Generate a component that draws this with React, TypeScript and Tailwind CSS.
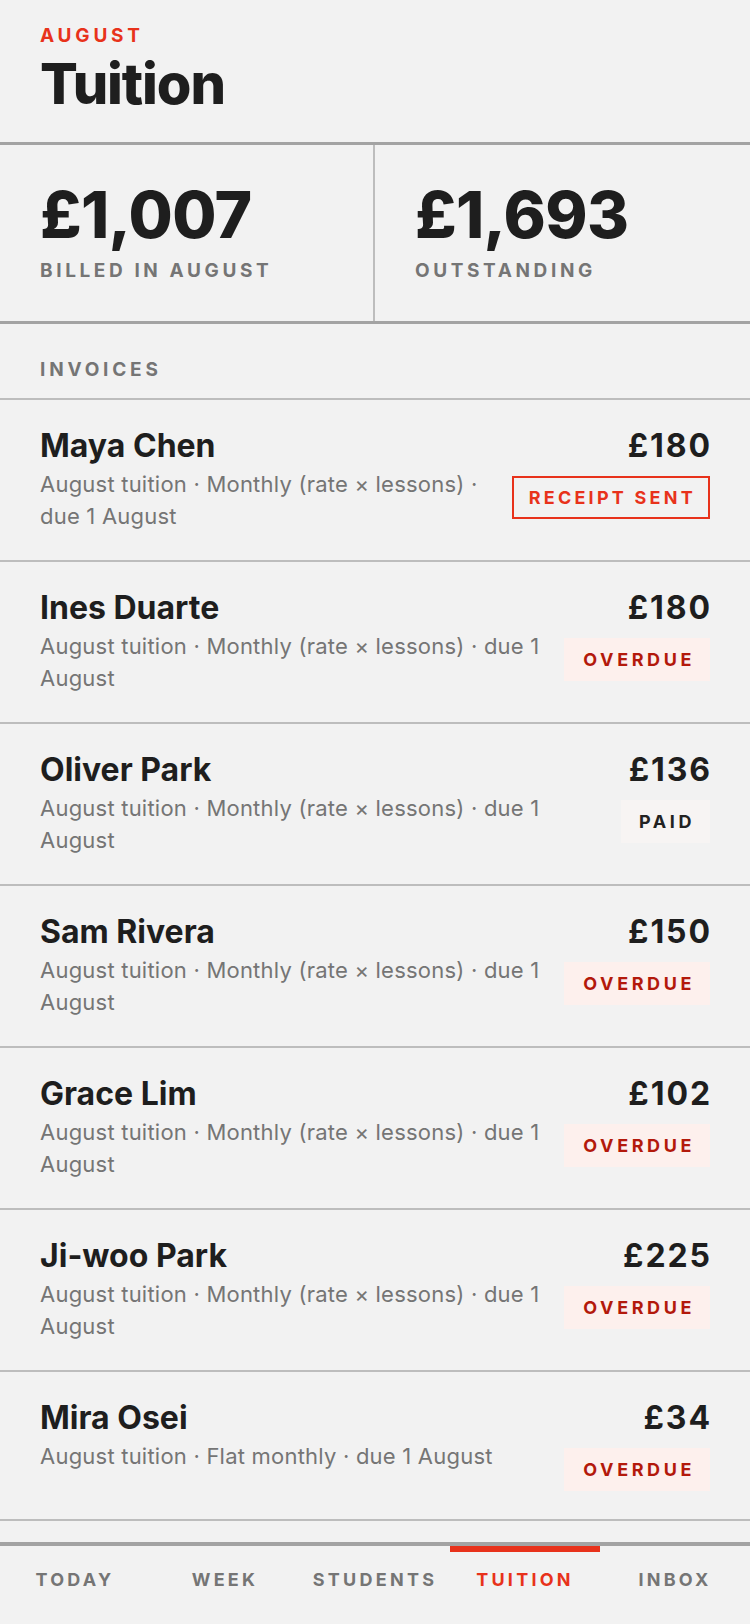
import React from "react";

type Status = "receipt" | "overdue" | "paid";

const invoices: { name: string; amount: string; desc: string; status: Status }[] = [
  { name: "Maya Chen", amount: "£180", desc: "August tuition · Monthly (rate × lessons) · due 1 August", status: "receipt" },
  { name: "Ines Duarte", amount: "£180", desc: "August tuition · Monthly (rate × lessons) · due 1 August", status: "overdue" },
  { name: "Oliver Park", amount: "£136", desc: "August tuition · Monthly (rate × lessons) · due 1 August", status: "paid" },
  { name: "Sam Rivera", amount: "£150", desc: "August tuition · Monthly (rate × lessons) · due 1 August", status: "overdue" },
  { name: "Grace Lim", amount: "£102", desc: "August tuition · Monthly (rate × lessons) · due 1 August", status: "overdue" },
  { name: "Ji-woo Park", amount: "£225", desc: "August tuition · Monthly (rate × lessons) · due 1 August", status: "overdue" },
  { name: "Mira Osei", amount: "£34", desc: "August tuition · Flat monthly · due 1 August", status: "overdue" },
];

function Badge({ status }: { status: Status }) {
  if (status === "receipt") {
    return (
      <div className="mt-3 h-[43px] pl-[15px] pr-[12px] flex items-center border-2 border-[#e8321b] text-[#e8321b] text-[18px] font-bold tracking-[0.18em]">
        RECEIPT SENT
      </div>
    );
  }
  if (status === "paid") {
    return (
      <div className="mt-3 h-[43px] pl-[18px] pr-[15px] flex items-center bg-[#f7f4f3] text-[#222] text-[18px] font-bold tracking-[0.2em]">
        PAID
      </div>
    );
  }
  return (
    <div className="mt-3 h-[43px] pl-[19px] pr-[15px] flex items-center bg-[#fdf0ed] text-[#b3190b] text-[18px] font-bold tracking-[0.2em]">
      OVERDUE
    </div>
  );
}

export default function App() {
  const tabs = ["TODAY", "WEEK", "STUDENTS", "TUITION", "INBOX"];
  return (
    <div
      className="h-[1624px] w-[750px] flex flex-col bg-[#f2f2f2] text-[#1e1e1e] overflow-hidden"
      style={{ fontFamily: "Inter, 'Liberation Sans', sans-serif" }}
    >
      <main className="flex-1 overflow-hidden">
        <header className="px-10 pt-[24px] pb-[28px] border-b-[3px] border-[#a3a3a3]">
          <div className="text-[19px] leading-[24px] font-bold tracking-[0.2em] text-[#e8321b]">AUGUST</div>
          <h1 className="mt-[6px] text-[56px] leading-[60px] font-extrabold tracking-[-0.02em]">Tuition</h1>
        </header>

        <section className="grid grid-cols-2 border-b-[3px] border-[#a3a3a3]">
          <div className="pl-10 pt-[34px] pb-[38px] border-r-2 border-[#bdbdbd]">
            <div className="text-[64px] leading-[72px] font-extrabold tracking-[-0.01em]">£1,007</div>
            <div className="mt-[8px] text-[19px] leading-[24px] font-bold tracking-[0.19em] text-[#757575]">BILLED IN AUGUST</div>
          </div>
          <div className="pl-10 pt-[34px] pb-[38px]">
            <div className="text-[64px] leading-[72px] font-extrabold tracking-[-0.01em]">£1,693</div>
            <div className="mt-[8px] text-[19px] leading-[24px] font-bold tracking-[0.19em] text-[#757575]">OUTSTANDING</div>
          </div>
        </section>

        <div className="px-10 pt-[34px] pb-[16px] border-b-2 border-[#bdbdbd] text-[19px] leading-[24px] font-bold tracking-[0.2em] text-[#757575]">
          INVOICES
        </div>

        <ul>
          {invoices.map((inv) => (
            <li key={inv.name} className="flex gap-6 px-10 pt-[28px] pb-[28px] border-b-2 border-[#bdbdbd]">
              <div className="flex-1 min-w-0">
                <div className="text-[32px] leading-[36px] font-bold">{inv.name}</div>
                <div className="mt-[4px] text-[22px] leading-[32px] text-[#757575] tracking-[0.01em]">{inv.desc}</div>
              </div>
              <div className="flex flex-col items-end">
                <div className="text-[32px] leading-[36px] font-bold tracking-[0.06em] -mr-[2px]">{inv.amount}</div>
                <Badge status={inv.status} />
              </div>
            </li>
          ))}
        </ul>
      </main>

      <nav className="relative h-[82px] border-t-4 border-[#a3a3a3] grid grid-cols-5">
        {tabs.map((t) => (
          <div key={t} className="relative flex items-center justify-center">
            {t === "TUITION" && <div className="absolute top-0 left-0 right-0 h-[6px] bg-[#e8321b]" />}
            <span
              className={
                "text-[18px] font-bold tracking-[0.18em] pb-[12px] " +
                (t === "TUITION" ? "text-[#e8321b]" : "text-[#757575]")
              }
            >
              {t}
            </span>
          </div>
        ))}
      </nav>
    </div>
  );
}
